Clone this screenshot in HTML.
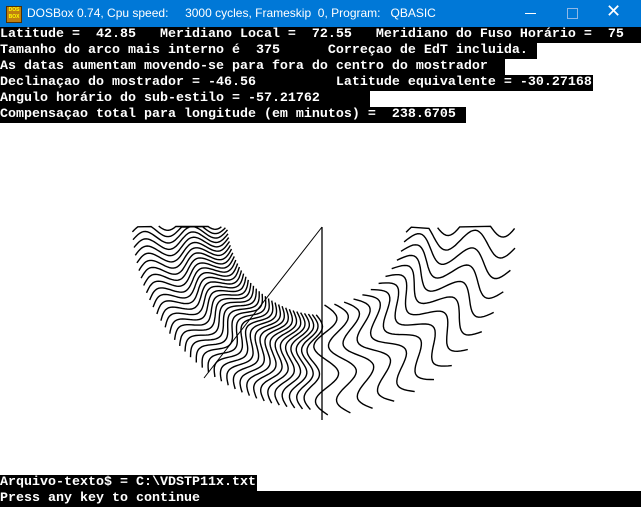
<!DOCTYPE html>
<html><head><meta charset="utf-8"><style>
body{margin:0;width:641px;height:507px;overflow:hidden;background:#fff;position:relative;font-family:"Liberation Mono",monospace;}
#tb{position:absolute;left:0;top:0;width:641px;height:27px;background:#0078d7;color:#fff;font-family:"Liberation Sans",sans-serif;font-size:12px;}
#tb .t{position:absolute;left:27px;top:6px;white-space:pre}
#ic{position:absolute;left:6px;top:6px;width:14px;height:15px;background:#c08010;border:1px solid #503000;font-size:5px;line-height:7px;color:#ff0;text-align:center;font-weight:bold}
.l{position:absolute;left:0;height:16px;background:#000;color:#fff;font-size:13.33px;line-height:16px;white-space:pre;font-weight:bold;overflow:hidden}
</style></head><body>
<div id="tb"><div id="ic">DOS<br>BOX</div><div class="t">DOSBox 0.74, Cpu speed:     3000 cycles, Frameskip  0, Program:   QBASIC</div>
<div style="position:absolute;left:525px;top:13px;width:11px;height:1px;background:#fff"></div>
<div style="position:absolute;left:567px;top:8px;width:9px;height:9px;border:1px solid #8fb8e6"></div>
<div style="position:absolute;left:606px;top:1px;font-size:18px;font-family:'DejaVu Sans';">✕</div></div>
<div class="l" style="top:27px;width:641px">Latitude =  42.85   Meridiano Local =  72.55   Meridiano do Fuso Horário =  75</div>
<div class="l" style="top:43px;width:537px">Tamanho do arco mais interno é  375      Correçao de EdT incluida.</div>
<div class="l" style="top:59px;width:505px">As datas aumentam movendo-se para fora do centro do mostrador</div>
<div class="l" style="top:75px;width:593px">Declinaçao do mostrador = -46.56          Latitude equivalente = -30.27168</div>
<div class="l" style="top:91px;width:370px">Angulo horário do sub-estilo = -57.21762</div>
<div class="l" style="top:107px;width:466px">Compensaçao total para longitude (em minutos) =  238.6705</div>
<div class="l" style="top:475px;width:257px">Arquivo-texto$ = C:\VDSTP11x.txt</div>
<div class="l" style="top:491px;width:641px">Press any key to continue</div>
<svg id="s" width="641" height="507" style="position:absolute;left:0;top:0">
<line x1="322" y1="227" x2="322" y2="420" stroke="#000" stroke-width="1.3"/>
<line x1="322" y1="227" x2="204" y2="378" stroke="#000" stroke-width="1"/>
</svg>
<script>
var s=document.getElementById('s'),cx=322,cy=220,d='';
function curve(th,amp,r0,r1,hw){var p='';for(var i=0;i<=50;i++){var r=r0+(r1-r0)*i/50;var w=amp*Math.sin((r-r0)/(r1-r0)*Math.PI*hw);var a=th;var x=cx+Math.sin(a)*r+Math.cos(a)*w;var y=cy+Math.cos(a)*r-Math.sin(a)*w;if(y<226)continue;p+=(p?'L':'M')+x.toFixed(1)+' '+y.toFixed(1);}return p;}
for(var k=0;k<38;k++){var th=-Math.PI/2*(1-k/38)-0.02;d+=curve(th,7,95,190,4);}
for(var k=0;k<14;k++){var th=0.03+Math.PI/2*k/13.5;d+=curve(th,12,85,195,4);}
var pa=document.createElementNS('http://www.w3.org/2000/svg','path');pa.setAttribute('d',d);pa.setAttribute('fill','none');pa.setAttribute('stroke','#000');pa.setAttribute('stroke-width','1.4');s.appendChild(pa);
</script>
</body></html>
